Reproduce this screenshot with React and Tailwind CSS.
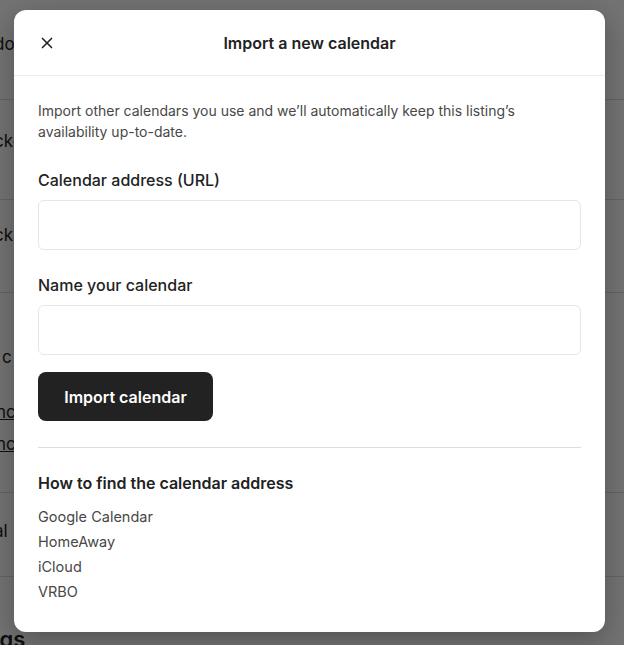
import { X } from "lucide-react";

const BG_ROWS = [
  { h: 100, text: "do", top: 32 },
  { h: 100, text: "ck-", top: 29 },
  { h: 93, text: "ck", top: 23 },
  { h: 200, text: "", top: 0, extra: true },
  { h: 84, text: "al", top: 26 },
];

const HELP_LINKS = ["Google Calendar", "HomeAway", "iCloud", "VRBO"];

function BackgroundPage() {
  return (
    <div className="flex flex-col text-[17px] text-[#222222]">
      {BG_ROWS.map((r, i) =>
        r.extra ? (
          <div key={i} className="h-[200px] border-b border-[#dddddd] flex flex-col pl-[2px]">
            <div className="mt-[52px] leading-6">c</div>
            <div className="mt-[31px] leading-6 underline -ml-[6px]">nc</div>
            <div className="mt-[8px] leading-6 underline -ml-[6px]">nc</div>
          </div>
        ) : (
          <div
            key={i}
            className="border-b border-[#dddddd] flex items-start"
            style={{ height: r.h }}
          >
            <span className="leading-6 -ml-[6px]" style={{ marginTop: r.top }}>
              {r.text}
            </span>
          </div>
        )
      )}
      <div className="mt-[50px] text-[22px] font-semibold leading-6 -ml-[14px]">ngs</div>
    </div>
  );
}

function Field({ label }) {
  return (
    <div className="flex flex-col">
      <label className="text-[16px] leading-6 font-medium text-[#222222]">{label}</label>
      <input
        type="text"
        className="mt-2 h-[50px] w-full rounded-[6px] border border-[#e6e6e6] px-3 outline-none"
      />
    </div>
  );
}

export default function App() {
  return (
    <div
      className="relative h-[645px] w-full overflow-hidden bg-white"
      style={{ fontFamily: "Inter, 'Noto Sans', sans-serif" }}
    >
      <BackgroundPage />
      <div className="absolute inset-0 bg-black/55" />

      <div className="absolute left-[14px] top-[10px] flex h-[622px] w-[591px] flex-col rounded-[12px] bg-white shadow-[0_8px_28px_rgba(0,0,0,0.28)]">
        <div className="relative flex h-[66px] items-center justify-center border-b border-[#ebebeb]">
          <button className="absolute left-[24px] top-[24px] flex h-[18px] w-[18px] items-center justify-center text-[#222222]">
            <X size={18} strokeWidth={2.2} />
          </button>
          <h1 className="text-[16px] font-semibold text-[#222222]">Import a new calendar</h1>
        </div>

        <div className="flex flex-col px-[24px] pt-[24px]">
          <p className="text-[14px] leading-[21px] text-[#484848]">
            Import other calendars you use and we’ll automatically keep this listing’s
            availability up-to-date.
          </p>

          <div className="mt-[26px]">
            <Field label="Calendar address (URL)" />
          </div>
          <div className="mt-[23px]">
            <Field label="Name your calendar" />
          </div>

          <button className="mt-[17px] h-[49px] w-[175px] rounded-[8px] bg-[#222222] text-[16px] font-semibold text-white">
            Import calendar
          </button>

          <div className="mt-[26px] border-t border-[#dddddd]" />

          <h2 className="mt-[23px] text-[16px] leading-6 font-semibold text-[#222222]">
            How to find the calendar address
          </h2>
          <ul className="mt-[9px] flex flex-col">
            {HELP_LINKS.map((l) => (
              <li key={l} className="text-[14.5px] leading-[25px] text-[#484848]">
                {l}
              </li>
            ))}
          </ul>
        </div>
      </div>
    </div>
  );
}
